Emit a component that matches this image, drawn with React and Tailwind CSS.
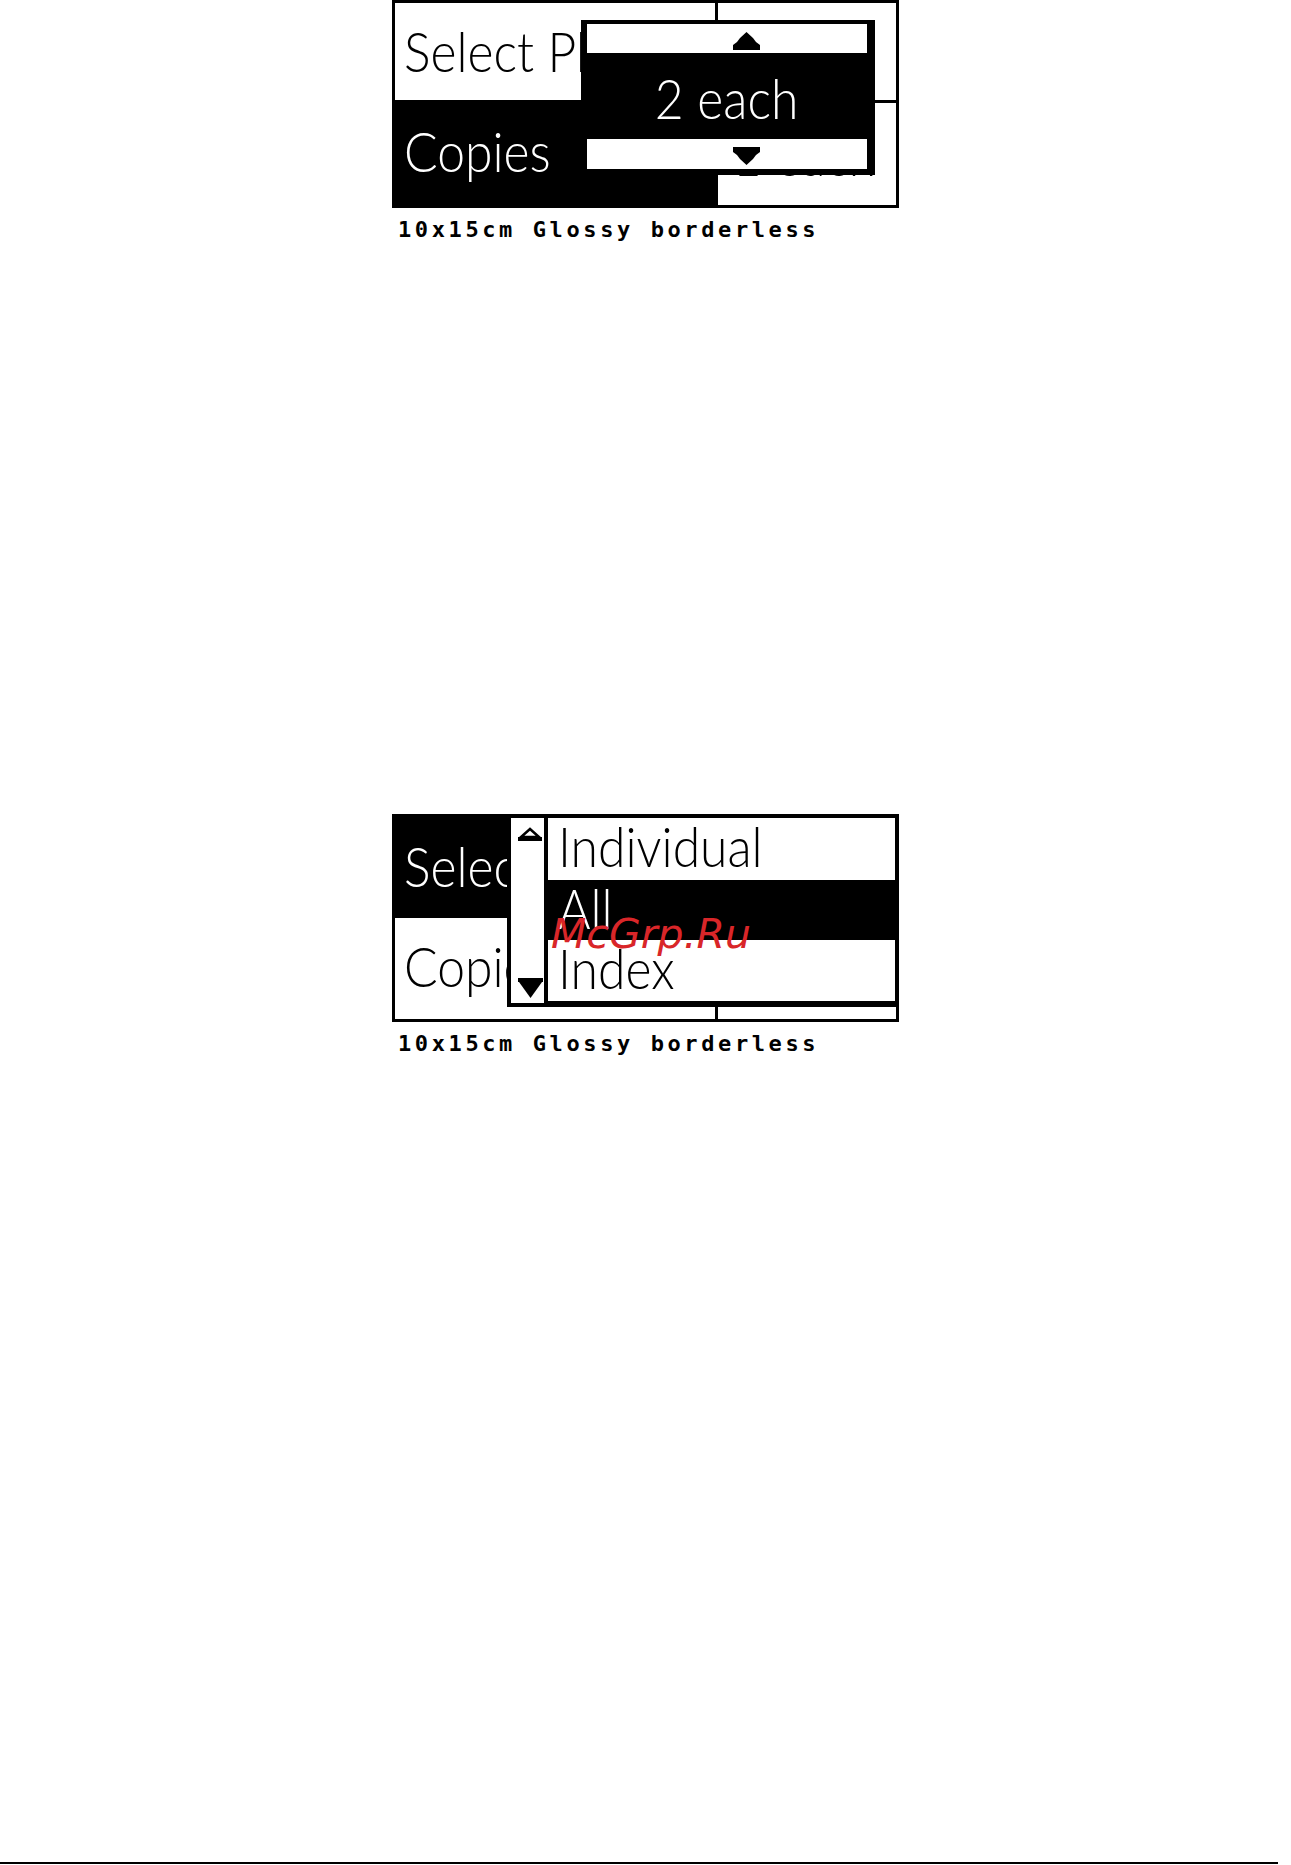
import React from 'react';

const lcd = "font-['Lato',sans-serif] font-light text-[56px] leading-none whitespace-nowrap";

// light condensed LCD lettering
const LcdText = ({ children, className = '' }) => (
  <span className={`${lcd} inline-block origin-left scale-x-[0.89] ${className}`}>{children}</span>
);

const UpArrow = () => (
  <svg width="27" height="18" viewBox="0 0 27 18" className="block">
    <polygon points="13.5,0 20,6 23,10 27,13 27,18 0,18 0,13 4,10 7,6" fill="black" />
  </svg>
);

const DownArrow = () => (
  <svg width="27" height="18" viewBox="0 0 27 18" className="block">
    <polygon points="0,0 27,0 27,5 23,8 20,12 13.5,18 7,12 4,8 0,5" fill="black" />
  </svg>
);

const ScrollUp = () => (
  <svg width="24" height="16" viewBox="0 0 24 16" className="block">
    <polygon points="12,2 21,10 3,10" fill="none" stroke="black" strokeWidth="2.5" />
    <rect x="0" y="10" width="24" height="4" fill="black" />
  </svg>
);

const ScrollDown = () => (
  <svg width="25" height="20" viewBox="0 0 25 20" className="block">
    <rect x="0" y="0" width="25" height="4" fill="black" />
    <polygon points="1,4 24,4 12.5,20" fill="black" />
  </svg>
);

const Caption = () => (
  <div className="mt-[11px] pl-[6px] font-['DejaVu_Sans_Mono',monospace] font-bold text-[22px] leading-none tracking-[3.6px] text-black whitespace-nowrap">
    10x15cm Glossy borderless
  </div>
);

const CopiesScreen = () => (
  <div className="relative w-[507px] h-[208px] bg-black p-[3px]">
    <div className="grid grid-cols-[320px_178px] grid-rows-[97px_102px] gap-[3px] h-full">
      <div className="bg-white pl-[9px] pt-[20px] overflow-hidden">
        <LcdText className="text-black">Select Photo</LcdText>
      </div>
      <div className="bg-white" />
      <div className="bg-black pl-[9px] pt-[20px] overflow-hidden">
        <LcdText className="text-white">Copies</LcdText>
      </div>
      <div className="bg-white pt-[24px] pr-[20px] flex justify-end overflow-hidden">
        <span className={`${lcd} inline-block origin-right scale-x-[0.89] text-black`}>1 each</span>
      </div>
    </div>

    {/* value picker */}
    <div className="absolute left-[189px] top-[20px] w-[294px] h-[155px] bg-black pt-[4px] pl-[6px] pr-[8px] pb-[6px] flex flex-col">
      <div className="h-[29px] bg-white pl-[146px] pt-[8px]">
        <UpArrow />
      </div>
      <div className="flex-1 flex items-center justify-center pt-[3px]">
        <span className={`${lcd} inline-block scale-x-[0.89] text-white`}>2 each</span>
      </div>
      <div className="h-[30px] bg-white pl-[146px] pt-[8px]">
        <DownArrow />
      </div>
    </div>
  </div>
);

const LayoutScreen = () => (
  <div className="relative w-[507px] h-[208px] bg-black p-[3px]">
    <div className="grid grid-cols-[320px_178px] grid-rows-[98px_101px] gap-[3px] h-full">
      <div className="bg-black pl-[9px] pt-[21px] overflow-hidden">
        <LcdText className="text-white">Select Photo</LcdText>
      </div>
      <div className="bg-white" />
      <div className="bg-white pl-[9px] pt-[20px] overflow-hidden">
        <LcdText className="text-black">Copies</LcdText>
      </div>
      <div className="bg-white" />
    </div>

    {/* option list */}
    <div className="absolute left-[115px] top-0 right-0 h-[193px] bg-black p-[4px] flex gap-[4px]">
      <div className="w-[33px] bg-white flex flex-col justify-between pt-[9px] pb-[5px] pl-[7px]">
        <ScrollUp />
        <ScrollDown />
      </div>
      <div className="flex-1 flex flex-col">
        <div className="h-[62px] bg-white pl-[10px]">
          <LcdText className="text-black">Individual</LcdText>
        </div>
        <div className="h-[62px] bg-black pl-[10px]">
          <LcdText className="text-white">All</LcdText>
        </div>
        <div className="h-[61px] bg-white pl-[10px] -mt-[2px]">
          <LcdText className="text-black">Index</LcdText>
        </div>
      </div>
    </div>

    <div className="absolute left-[159px] top-[100px] font-['DejaVu_Sans',sans-serif] italic text-[41px] leading-none text-[#d92629] whitespace-nowrap">
      McGrp.Ru
    </div>
  </div>
);

export default function App() {
  return (
    <div className="w-[1291px] h-[1865px] bg-white flex flex-col">
      <div className="pl-[392px]">
        <CopiesScreen />
        <Caption />
      </div>
      <div className="pl-[392px] mt-[573px]">
        <LayoutScreen />
        <Caption />
      </div>
      <div className="mt-auto mb-[1px] w-[1278px] h-[2px] bg-black" />
    </div>
  );
}
